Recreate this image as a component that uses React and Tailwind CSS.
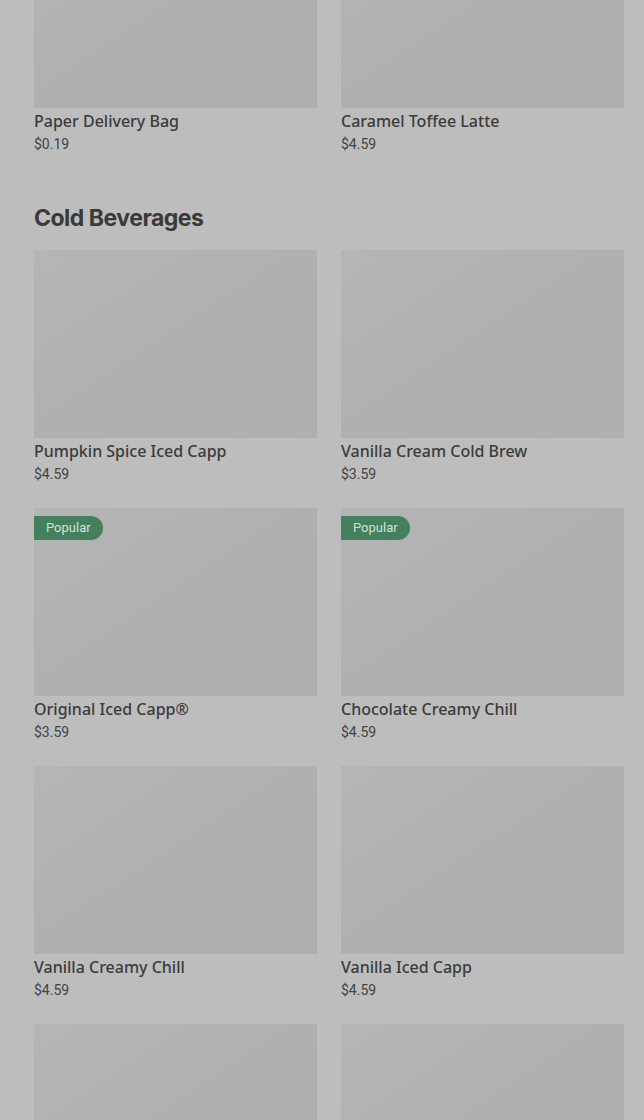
const topItems = [
  { name: 'Paper Delivery Bag', price: '$0.19' },
  { name: 'Caramel Toffee Latte', price: '$4.59' },
]

const coldItems = [
  { name: 'Pumpkin Spice Iced Capp', price: '$4.59' },
  { name: 'Vanilla Cream Cold Brew', price: '$3.59' },
  { name: 'Original Iced Capp®', price: '$3.59', popular: true },
  { name: 'Chocolate Creamy Chill', price: '$4.59', popular: true },
  { name: 'Vanilla Creamy Chill', price: '$4.59' },
  { name: 'Vanilla Iced Capp', price: '$4.59' },
  { name: '', price: '' },
  { name: '', price: '' },
]

function Card({ item }) {
  return (
    <div className="relative">
      <div className="h-[188px] w-full bg-gradient-to-br from-[#b5b5b5] via-[#b0b0b0] to-[#afafaf]" />
      {item.popular && (
        <span className="absolute left-0 top-2 flex h-6 items-center rounded-r-full bg-[#447f5e] px-3 font-['Roboto',sans-serif] text-[13px] text-[#d3e2d8]">
          Popular
        </span>
      )}
      {item.name && (
        <>
          <p className="mt-px font-['Noto_Sans',sans-serif] text-[16px] font-medium leading-6 text-[#3b3b3b]">{item.name}</p>
          <p className="mt-px text-[14px] leading-5 text-[#434343]">{item.price}</p>
        </>
      )}
    </div>
  )
}

export default function App() {
  return (
    <div className="h-[1120px] overflow-hidden bg-[#bdbdbd] pl-[34px] pr-5 font-['Roboto',sans-serif]">
      <div className="-mt-[80px] grid grid-cols-2 gap-x-6">
        {topItems.map((it, i) => (
          <Card key={i} item={it} />
        ))}
      </div>
      <h2 className="mb-4 mt-12 font-['Inter',sans-serif] text-[23px] font-bold leading-8 tracking-[-0.5px] text-[#393939]">
        Cold Beverages
      </h2>
      <div className="grid grid-cols-2 gap-x-6 gap-y-6">
        {coldItems.map((it, i) => (
          <Card key={i} item={it} />
        ))}
      </div>
    </div>
  )
}
